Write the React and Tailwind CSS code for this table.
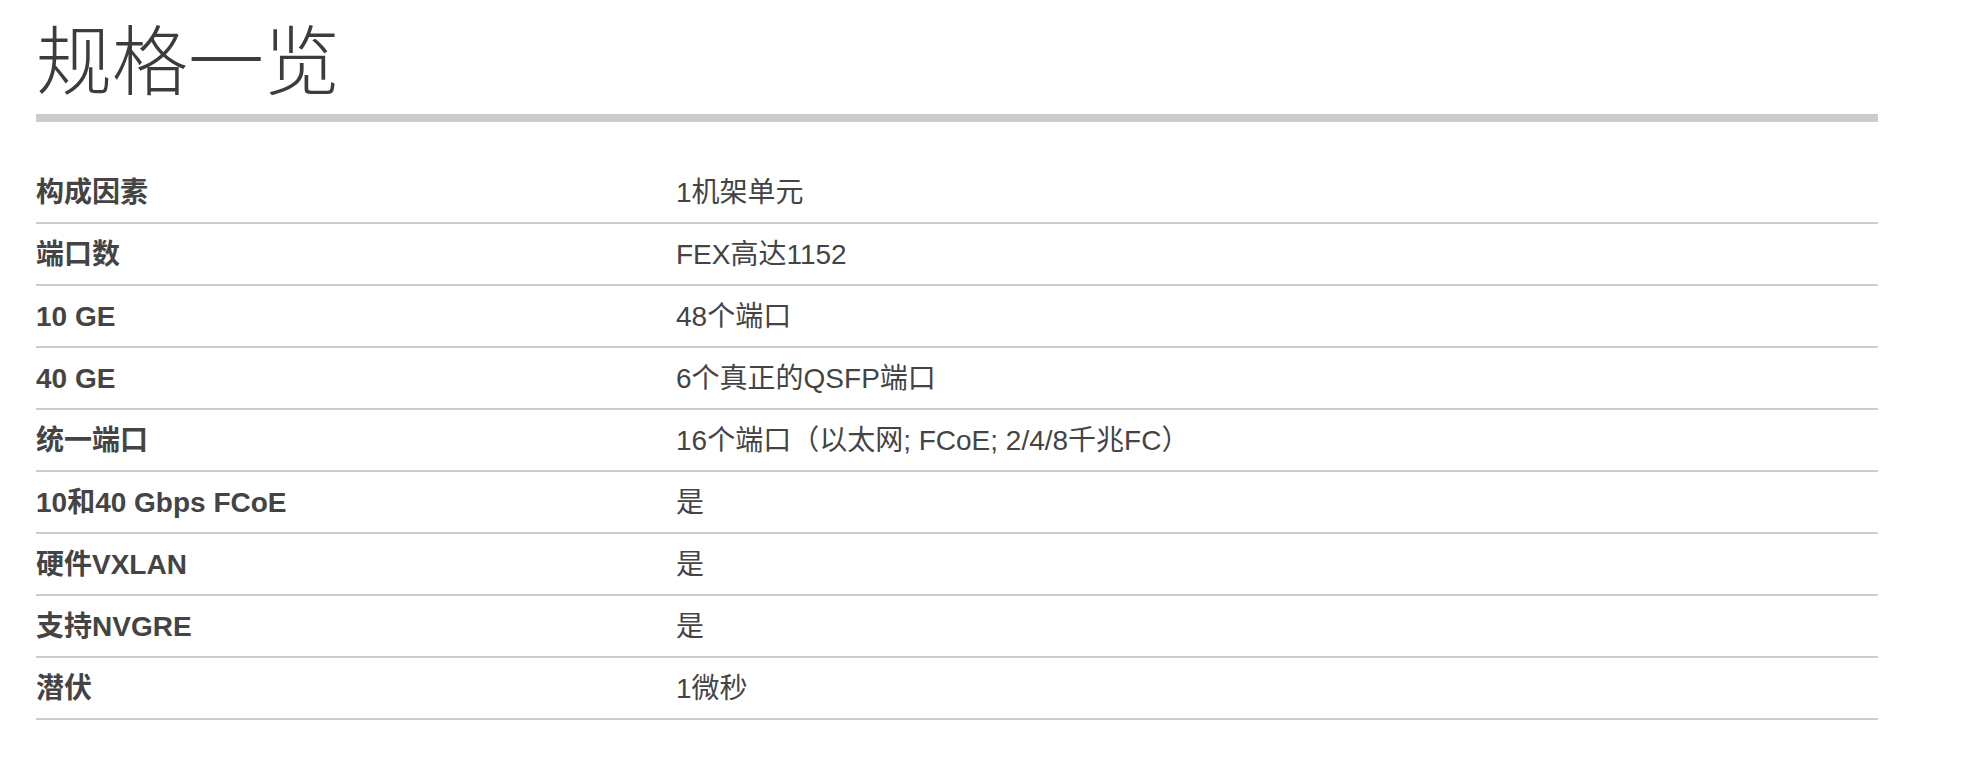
const specs = [
    ["构成因素", "1机架单元"],
    ["端口数", "FEX高达1152"],
    ["10 GE", "48个端口"],
    ["40 GE", "6个真正的QSFP端口"],
    ["统一端口", "16个端口（以太网; FCoE; 2/4/8千兆FC）"],
    ["10和40 Gbps FCoE", "是"],
    ["硬件VXLAN", "是"],
    ["支持NVGRE", "是"],
    ["潜伏", "1微秒"],
];

export default function App() {
    return (
        <div className="min-h-screen bg-white text-[#444444]" style={{ fontFamily: '"Liberation Sans", "Noto Sans CJK SC", sans-serif' }}>
            <div className="ml-[36px] w-[1842px] pt-[20px]">
                <h1 className="text-[76px] font-extralight leading-[86px] text-[#3c3c3c]">规格一览</h1>
                <div className="mt-[8px] h-[8px] bg-[#cccccc]" />

                <div className="mt-[40px]">
                    {specs.map(([label, value]) => (
                        <div key={label} className="grid h-[62px] grid-cols-[640px_1fr] items-center border-b-2 border-[#cccccc] pt-[2px] text-[28px]">
                            <div className="font-bold">{label}</div>
                            <div>{value}</div>
                        </div>
                    ))}
                </div>
            </div>
        </div>
    );
}
